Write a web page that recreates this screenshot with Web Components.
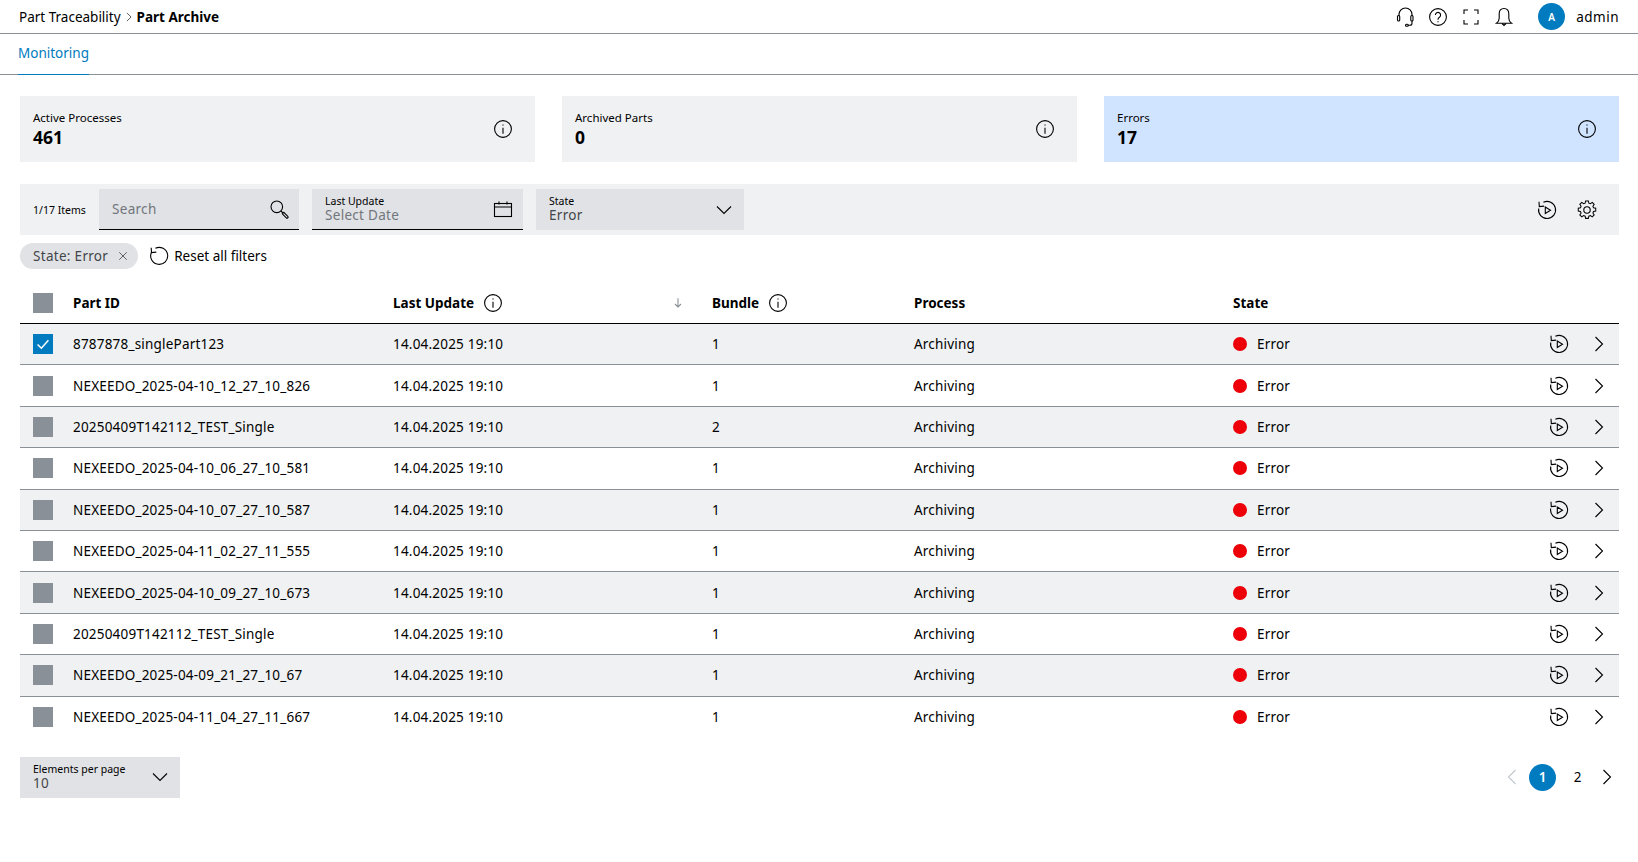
<!DOCTYPE html>
<html lang="en">
<head>
<meta charset="utf-8">
<title>Part Archive</title>
<style>
  html, body { margin: 0; background: #fff; }
  body { font-family: "Noto Sans", "Liberation Sans", sans-serif; font-size: 14px; color: #000; }
</style>
</head>
<body>
<script>
const ICONS = {
    info: `<circle cx="12" cy="12" r="8.4"/><path d="M12 10.8v6"/><path d="M11.4 8h1.2"/>`,
    help: `<circle cx="12" cy="12" r="8.4"/><path d="M9.4 10a2.6 2.6 0 1 1 4 2.2c-1 .6-1.4 1.1-1.4 2.2v.4"/><path d="M11.4 16.8h1.2"/>`,
    headset: `<path d="M6 11V9.5a6.5 6.5 0 0 1 13 0V11"/><rect x="4.5" y="10.5" width="2.2" height="5.5" rx="1"/><rect x="17.8" y="10.5" width="2.2" height="5.5" rx="1"/><path d="M19 16v2.2a2 2 0 0 1-2 2h-2"/><rect x="12.5" y="19.2" width="2.8" height="2" rx="1"/>`,
    fullscreen: `<path d="M5 9V5h4M15 5h4v4M19 15v4h-4M9 19H5v-4"/>`,
    bell: `<path d="M12 3.5c-3.2 0-4.8 2.2-4.8 5.2v4.6c0 2.2-1 3.7-2.7 4.9h15c-1.700-1.200-2.700-2.700-2.700-4.900V8.700c0-3-1.600-5.200-4.800-5.200z"/><path d="M10 18.500l2 2 2-2"/>`,
    search: `<circle cx="9.800" cy="9.800" r="5.800"/><path d="M14 14l1.800 1.800M15.300 16.800l1.500-1.500 4 4c.4.400.4 1.100 0 1.500s-1.100.4-1.500 0z"/>`,
    calendar: `<rect x="3.500" y="6.500" width="17" height="13"/><path d="M3.500 10h17M8 4.500v3M16 4.500v3"/>`,
    down: `<path d="M5 8.500l7 7 7-7"/>`,
    right: `<path d="M8.500 5l7 7-7 7"/>`,
    left: `<path d="M15.500 5l-7 7 7 7"/>`,
    close: `<path d="M7 7l10 10M17 7L7 17"/>`,
    reset: `<path d="M8.400 4.300A8.500 8.500 0 1 1 4.500 8.300"/><path d="M4.200 3.800l.3 4.800 4.800-.5"/>`,
    replay: `<path d="M8.400 4.300A8.500 8.500 0 1 1 3.700 10.500"/><path d="M4 3.800l.3 4.800 4.800-.5"/><path d="M10.300 9v6.400l5.200-3.200z"/>`,
    gear: `<circle cx="12" cy="12" r="3.200"/><path d="M10.300 3.500h3.400l.5 2.500 1.600.7 2.100-1.400 2.400 2.400-1.400 2.100.7 1.600 2.500.5v3.400l-2.500.5-.7 1.600 1.400 2.100-2.400 2.400-2.100-1.400-1.600.7-.5 2.500" transform="translate(-.2 -1) scale(.96)" style="display:none"/><path d="M10.500 3.600h3l.5 2.400 1.700.7 2-1.400 2.100 2.100-1.400 2 .7 1.700 2.400.5v3l-2.400.5-.7 1.700 1.400 2-2.100 2.100-2-1.400-1.700.7-.5 2.400h-3l-.5-2.400-1.700-.7-2 1.400-2.100-2.100 1.400-2-.7-1.700-2.400-.5v-3l2.400-.5.7-1.700-1.400-2 2.100-2.100 2 1.400 1.700-.7z" transform="translate(12 12) scale(.92) translate(-12 -13.500)"/>`,
    check: `<path d="M5.500 12.500l4.500 4.500 8.500-9.500"/>`,
    sort: `<path d="M12 5v13M7.500 13.500l4.500 4.500 4.500-4.500"/>`
};

class UiIcon extends HTMLElement {
    constructor() {
        super();
        const size = this.getAttribute("size") || 24;
        const width = this.getAttribute("stroke") || 1.1;
        this.attachShadow({ mode: "open" }).innerHTML = `
            <style>
                :host { display: inline-flex; flex: none; width: ${size}px; height: ${size}px; color: inherit; }
                svg { width: 100%; height: 100%; fill: none; stroke: currentColor; stroke-width: ${width}; }
            </style>
            <svg viewBox="0 0 24 24">${ICONS[this.getAttribute("name")]}</svg>`;
    }
}
customElements.define("ui-icon", UiIcon);

class AppHeader extends HTMLElement {
    constructor() {
        super();
        this.attachShadow({ mode: "open" }).innerHTML = `
            <style>
                :host { display: flex; align-items: center; height: 33px; border-bottom: 1px solid #8a9097; padding: 0 19px; font-size: 13.5px; }
                b { font-weight: 700; }
                .crumbs { display: flex; align-items: center; }
                .crumbs ui-icon { margin: 0 1px; }
                .tools { margin-left: auto; display: flex; align-items: center; gap: 9px; }
                .avatar { width: 27px; height: 27px; border-radius: 50%; background: #007bc0; color: #fff; font-size: 10px; font-weight: 600; display: flex; align-items: center; justify-content: center; margin-left: 13px; }
                .user { margin: 0 0 0 2px; letter-spacing: .5px; }
            </style>
            <div class="crumbs"><span>Part Traceability</span><ui-icon name="right" size="14"></ui-icon><b>Part Archive</b></div>
            <div class="tools">
                <ui-icon name="headset"></ui-icon>
                <ui-icon name="help"></ui-icon>
                <ui-icon name="fullscreen"></ui-icon>
                <ui-icon name="bell"></ui-icon>
                <div class="avatar">A</div>
                <span class="user">admin</span>
            </div>`;
    }
}
customElements.define("app-header", AppHeader);

class TabBar extends HTMLElement {
    constructor() {
        super();
        this.attachShadow({ mode: "open" }).innerHTML = `
            <style>
                :host { display: flex; height: 40px; border-bottom: 1px solid #8a9097; padding-left: 18px; }
                div { color: #007bc0; font-size: 13.5px; line-height: 38px; height: 40px; border-bottom: 1px solid #007bc0; box-sizing: content-box; }
            </style>
            <div><slot></slot></div>`;
    }
}
customElements.define("tab-bar", TabBar);

class StatCard extends HTMLElement {
    constructor() {
        super();
        this.attachShadow({ mode: "open" }).innerHTML = `
            <style>
                :host { display: flex; align-items: center; justify-content: space-between; flex: 1; height: 66px; box-sizing: border-box; background: #eff1f2; padding: 0 20px 0 13px; }
                :host([active]) { background: #d1e4ff; }
                .label { font-size: 11.5px; line-height: 16px; }
                .value { font-size: 17.5px; font-weight: 700; line-height: 22px; }
                ui-icon { margin-top: -1px; }
            </style>
            <div>
                <div class="label"><slot name="label"></slot></div>
                <div class="value"><slot name="value"></slot></div>
            </div>
            <ui-icon name="info"></ui-icon>`;
    }
}
customElements.define("stat-card", StatCard);

class FormField extends HTMLElement {
    constructor() {
        super();
        const icon = this.getAttribute("icon");
        this.attachShadow({ mode: "open" }).innerHTML = `
            <style>
                :host { display: flex; align-items: center; justify-content: space-between; flex: none; height: 41px; box-sizing: border-box; background: #e0e2e5; padding: 0 8px 0 13px; }
                :host([underlined]) { border-bottom: 1px solid #000; }
                .label { font-size: 10.5px; line-height: 12px; color: #000; }
                .value { font-size: 13.5px; line-height: 17px; color: #43464a; letter-spacing: .3px; }
                :host([muted]) .value { color: #71767c; }
            </style>
            <div>
                <div class="label"><slot name="label"></slot></div>
                <div class="value"><slot></slot></div>
            </div>
            <ui-icon name="${icon}"></ui-icon>`;
    }
}
customElements.define("form-field", FormField);

class FilterToolbar extends HTMLElement {
    constructor() {
        super();
        this.attachShadow({ mode: "open" }).innerHTML = `
            <style>
                :host { display: flex; align-items: center; height: 51px; background: #eff1f2; padding: 0 20px 0 13px; box-sizing: border-box; }
                .count { font-size: 10.5px; width: 66px; flex: none; }
                .fields { display: flex; gap: 13px; }
                .tools { margin-left: auto; display: flex; gap: 16px; }
                #search { width: 200px; }
                #date { width: 211px; }
                #state { width: 208px; }
            </style>
            <div class="count"><slot name="count"></slot></div>
            <div class="fields">
                <form-field id="search" underlined muted icon="search"><slot name="search"></slot></form-field>
                <form-field id="date" underlined muted icon="calendar"><span slot="label">Last Update</span>Select Date</form-field>
                <form-field id="state" icon="down"><span slot="label">State</span>Error</form-field>
            </div>
            <div class="tools">
                <ui-icon name="replay"></ui-icon>
                <ui-icon name="gear"></ui-icon>
            </div>`;
    }
}
customElements.define("filter-toolbar", FilterToolbar);

class FilterChips extends HTMLElement {
    constructor() {
        super();
        this.attachShadow({ mode: "open" }).innerHTML = `
            <style>
                :host { display: flex; align-items: center; height: 26px; margin-top: 8px; font-size: 13.500px; }
                .chip { display: flex; align-items: center; height: 26px; box-sizing: border-box; background: #e0e2e5; border-radius: 13px; padding: 0 6px 0 13px; color: #43464a; letter-spacing: .3px; }
                .chip ui-icon { margin-left: 6px; }
                .reset { display: flex; align-items: center; margin-left: 9px; gap: 3px; }
            </style>
            <div class="chip"><span>State: Error</span><ui-icon name="close" size="18"></ui-icon></div>
            <div class="reset"><ui-icon name="reset"></ui-icon><span>Reset all filters</span></div>`;
    }
}
customElements.define("filter-chips", FilterChips);

class CheckBox extends HTMLElement {
    constructor() {
        super();
        this.attachShadow({ mode: "open" }).innerHTML = `
            <style>
                :host { display: flex; width: 20px; height: 20px; background: #8a9097; color: #fff; }
                :host([checked]) { background: #007bc0; }
            </style>
            ${this.hasAttribute("checked") ? '<ui-icon name="check" size="20" stroke="1.8"></ui-icon>' : ""}`;
    }
}
customElements.define("check-box", CheckBox);

const COLUMNS = "53px 320px 319px 202px 319px 1fr 90px";

class TableHead extends HTMLElement {
    constructor() {
        super();
        this.attachShadow({ mode: "open" }).innerHTML = `
            <style>
                :host { display: grid; grid-template-columns: ${COLUMNS}; align-items: center; height: 41px; box-sizing: border-box; margin-top: 14px; border-bottom: 1px solid #000; font-weight: 700; font-size: 13.500px; }
                check-box { margin-left: 13px; }
                .cell { display: flex; align-items: center; gap: 7px; }
                .sort { margin-left: auto; margin-right: 26px; color: #8a9097; }
            </style>
            <check-box></check-box>
            <div class="cell">Part ID</div>
            <div class="cell">Last Update <ui-icon name="info"></ui-icon><ui-icon class="sort" name="sort" size="16" stroke="1.6"></ui-icon></div>
            <div class="cell">Bundle <ui-icon name="info"></ui-icon></div>
            <div class="cell">Process</div>
            <div class="cell">State</div>`;
    }
}
customElements.define("table-head", TableHead);

class PartRow extends HTMLElement {
    constructor() {
        super();
        const checked = this.hasAttribute("checked") ? "checked" : "";
        this.attachShadow({ mode: "open" }).innerHTML = `
            <style>
                :host { display: grid; grid-template-columns: ${COLUMNS}; align-items: center; height: 41.4px; box-sizing: border-box; border-bottom: 1px solid #8a9097; font-size: 13.500px; letter-spacing: .2px; }
                :host(:nth-of-type(odd)) { background: #eff1f2; }
                :host(:last-of-type) { border-bottom: 0; }
                check-box { margin-left: 13px; }
                .state { display: flex; align-items: center; gap: 10px; }
                .dot { width: 14px; height: 14px; border-radius: 50%; background: #ed0007; }
                .actions { display: flex; justify-content: flex-end; align-items: center; gap: 16px; padding-right: 8px; }
            </style>
            <check-box ${checked}></check-box>
            <div>${this.getAttribute("part")}</div>
            <div>14.04.2025 19:10</div>
            <div>${this.getAttribute("bundle")}</div>
            <div>Archiving</div>
            <div class="state"><span class="dot"></span>Error</div>
            <div class="actions"><ui-icon name="replay"></ui-icon><ui-icon name="right"></ui-icon></div>`;
    }
}
customElements.define("part-row", PartRow);

class PagerFooter extends HTMLElement {
    constructor() {
        super();
        this.attachShadow({ mode: "open" }).innerHTML = `
            <style>
                :host { display: flex; align-items: center; justify-content: space-between; margin-top: 19px; }
                #size { width: 160px; }
                .pages { display: flex; align-items: center; font-size: 13.500px; }
                .pages ui-icon { color: #000; }
                .pages .off { color: #c1c7cc; }
                .one { width: 27px; height: 27px; border-radius: 50%; background: #007bc0; color: #fff; display: flex; align-items: center; justify-content: center; font-weight: 600; margin: 0 2px 0 5px; }
                .two { width: 27px; text-align: center; margin: 0 4px 0 6px; }
            </style>
            <form-field id="size" icon="down"><span slot="label">Elements per page</span>10</form-field>
            <div class="pages">
                <ui-icon class="off" name="left"></ui-icon>
                <div class="one">1</div>
                <div class="two">2</div>
                <ui-icon name="right"></ui-icon>
            </div>`;
    }
}
customElements.define("pager-footer", PagerFooter);

class PartArchive extends HTMLElement {
    constructor() {
        super();
        const parts = [
            ["8787878_singlePart123", 1],
            ["NEXEEDO_2025-04-10_12_27_10_826", 1],
            ["20250409T142112_TEST_Single", 2],
            ["NEXEEDO_2025-04-10_06_27_10_581", 1],
            ["NEXEEDO_2025-04-10_07_27_10_587", 1],
            ["NEXEEDO_2025-04-11_02_27_11_555", 1],
            ["NEXEEDO_2025-04-10_09_27_10_673", 1],
            ["20250409T142112_TEST_Single", 1],
            ["NEXEEDO_2025-04-09_21_27_10_67", 1],
            ["NEXEEDO_2025-04-11_04_27_11_667", 1]
        ];
        const rows = parts.map((p, i) => `<part-row part="${p[0]}" bundle="${p[1]}" ${i === 0 ? "checked" : ""}></part-row>`).join("");
        this.attachShadow({ mode: "open" }).innerHTML = `
            <style>
                :host { display: block; }
                main { padding: 21px 19px 0 20px; }
                .cards { display: flex; gap: 27px; margin-bottom: 22px; }
                .rows { display: block; }
            </style>
            <app-header></app-header>
            <tab-bar>Monitoring</tab-bar>
            <main>
                <div class="cards">
                    <stat-card><span slot="label">Active Processes</span><span slot="value">461</span></stat-card>
                    <stat-card><span slot="label">Archived Parts</span><span slot="value">0</span></stat-card>
                    <stat-card active><span slot="label">Errors</span><span slot="value">17</span></stat-card>
                </div>
                <filter-toolbar><span slot="count">1/17 Items</span><span slot="search">Search</span></filter-toolbar>
                <filter-chips></filter-chips>
                <table-head></table-head>
                <div class="rows">${rows}</div>
                <pager-footer></pager-footer>
            </main>`;
    }
}
customElements.define("part-archive", PartArchive);

document.body.appendChild(document.createElement("part-archive"));
</script>
</body>
</html>
